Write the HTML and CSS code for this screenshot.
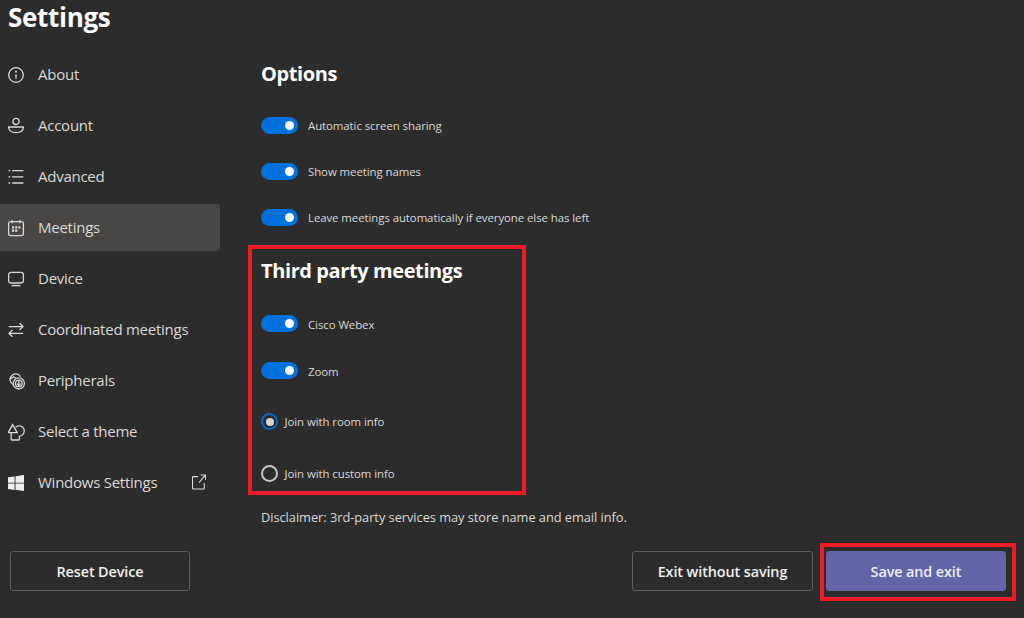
FILE: index.html
```html
<!DOCTYPE html>
<html lang="en">
<head>
<meta charset="utf-8">
<title>Settings</title>
<link rel="stylesheet" href="styles.css">
</head>
<body>
<div class="page">
  <div class="top">
    <aside class="sidebar">
      <h1 class="title">Settings</h1>
      <nav class="nav">
        <div class="nav-item">
          <svg class="icon" viewBox="0 -1 18 18"><circle cx="8" cy="8" r="7.3"/><path d="M8 7.2v4.4"/><circle class="fill" cx="8" cy="4.8" r="1"/></svg>
          <span>About</span>
        </div>
        <div class="nav-item">
          <svg class="icon" viewBox="0 -1 18 18"><circle cx="8" cy="3.4" r="3.1"/><path d="M.6 9h14.8c0 3.4-2.6 5.6-7.4 5.6S.6 12.4.6 9z"/></svg>
          <span>Account</span>
        </div>
        <div class="nav-item">
          <svg class="icon" viewBox="0 -1 18 18"><path d="M4.2 1.6h11.2M4.2 7.8h11.2M4.2 14h11.2M.6 1.6h1.6M.6 7.8h1.6M.6 14h1.6"/></svg>
          <span>Advanced</span>
        </div>
        <div class="nav-item active">
          <svg class="icon" viewBox="0 -1 18 18"><rect x=".6" y="1.6" width="14.8" height="14" rx="2"/><path d="M4.2 0v3.2M11.8 0v3.2"/><path class="dots" d="M4 6.2h2.2v2.2H4zM7.2 6.2h2.2v2.2H7.2zM10.4 6.2h2v2.2h-2zM4 9.6h2.2v2.2H4zM7.2 9.6h2.2v2.2H7.2z"/></svg>
          <span>Meetings</span>
        </div>
        <div class="nav-item">
          <svg class="icon" viewBox="0 -1 18 18"><rect x=".6" y="1.4" width="14.8" height="10.6" rx="2.4"/><path d="M3.6 14.6h8.8"/></svg>
          <span>Device</span>
        </div>
        <div class="nav-item">
          <svg class="icon" viewBox="0 -1 18 18"><path d="M.8 4.6h14.2M11.5 1.2L15 4.6 11.5 8M1 11.4h14.2M4.5 8L1 11.4l3.5 3.4"/></svg>
          <span>Coordinated meetings</span>
        </div>
        <div class="nav-item">
          <svg class="icon" viewBox="0 -1 18 18"><path d="M5.4 11.6A5.6 5.6 0 1 1 12.6 3.8"/><path d="M2.6 6l3-2.2 2.2 1.4"/><circle cx="10.8" cy="10.4" r="5.6"/><circle cx="10.8" cy="10.4" r="3.3"/><path d="M10.8 7.8v4.6M8.9 10.6l1.9 1.9 1.9-1.9"/></svg>
          <span>Peripherals</span>
        </div>
        <div class="nav-item">
          <svg class="icon" viewBox="0 -1 18 18"><path d="M4.6.6L.2 8.6h9z"/><path d="M7.6 3.2a5.2 5.2 0 1 1 3.8 9"/><path d="M3.2 8.6v6.6c0 .5.3.8.8.8h6.6c.5 0 .8-.3.8-.8v-3"/></svg>
          <span>Select a theme</span>
        </div>
        <div class="nav-item">
          <svg class="icon win" viewBox="0 -1 18 18"><path d="M0 2.3l6.6-.9v6.3H0zM7.5 1.3L16 0v7.7H7.5zM0 8.6h6.6v6.4L0 14.1zM7.5 8.6H16V16l-8.5-1.2z"/></svg>
          <span class="nav-grow">Windows Settings</span>
          <svg class="icon ext" viewBox="0 0 14 16"><path d="M6 2.6H1.2c-.4 0-.7.3-.7.7v11c0 .4.3.7.7.7h10.4c.4 0 .7-.3.7-.7V9M7 8.6L13 1.4M8.6 1h4.9v4.8"/></svg>
        </div>
      </nav>
    </aside>
    <main class="main">
      <h2 class="heading">Options</h2>
      <div class="option-list">
        <div class="option"><span class="toggle"></span><span>Automatic screen sharing</span></div>
        <div class="option"><span class="toggle"></span><span>Show meeting names</span></div>
        <div class="option"><span class="toggle"></span><span>Leave meetings automatically if everyone else has left</span></div>
      </div>
      <section class="third-party">
        <h2 class="heading">Third party meetings</h2>
        <div class="row row-cisco"><span class="toggle"></span><span>Cisco Webex</span></div>
        <div class="row row-zoom"><span class="toggle"></span><span>Zoom</span></div>
        <div class="row row-radio1"><span class="radio checked"></span><span>Join with room info</span></div>
        <div class="row row-radio2"><span class="radio"></span><span>Join with custom info</span></div>
      </section>
      <p class="disclaimer">Disclaimer: 3rd-party services may store name and email info.</p>
    </main>
  </div>
  <footer class="footer">
    <button class="btn">Reset Device</button>
    <div class="actions">
      <button class="btn btn-exit">Exit without saving</button>
      <div class="save-frame"><button class="btn btn-primary">Save and exit</button></div>
    </div>
  </footer>
</div>
</body>
</html>
```
FILE: styles.css
```css
* { box-sizing: border-box; }
html, body { margin: 0; height: 100%; }
body {
  background: #2d2c2c;
  color: #d9d8d7;
  font-family: "Open Sans", "Noto Sans", sans-serif;
  overflow: hidden;
}
.page { display: flex; flex-direction: column; width: 1024px; height: 618px; }
.top { display: flex; height: 543px; }
.sidebar { width: 220px; flex: none; }
.title {
  margin: 0;
  height: 51px;
  padding: 1px 0 0 8px;
  font-size: 26px;
  line-height: 33px;
  font-weight: 700;
  letter-spacing: -.3px;
  color: #fff;
}
.nav { display: flex; flex-direction: column; gap: 4px; }
.nav-item {
  display: flex;
  align-items: center;
  height: 47px;
  padding-left: 8px;
  font-size: 15px;
  line-height: 20px;
  letter-spacing: -.25px;
  border-radius: 0 3px 3px 0;
}
.nav-item span { margin-bottom: 2px; }
.nav-item.active { background: #484644; }
.icon {
  width: 18px;
  height: 18px;
  flex: none;
  margin-right: 12px;
  fill: none;
  stroke: #d9d8d7;
  stroke-width: 1.3;
}
.icon .fill, .icon .dots { fill: #d9d8d7; stroke: none; }
.icon.win { fill: #eeeeee; stroke: none; }
.icon.ext { width: 14px; height: 16px; margin: 0 0 2px; stroke-width: 1.1; }
.nav-grow { width: 154px; }
.main { flex: 1; padding: 60px 0 0 28px; }
.heading {
  margin: 0;
  height: 28px;
  font-size: 20px;
  line-height: 28px;
  font-weight: 700;
  letter-spacing: -.4px;
  color: #fff;
}
.main > .heading { margin-left: 13px; }
.option-list { margin: 14px 0 0 13px; }
.option, .row {
  display: flex;
  align-items: center;
  font-size: 11.4px;
  letter-spacing: -.06px;
}
.option { height: 46px; }
.toggle {
  position: relative;
  flex: none;
  width: 37px;
  height: 17px;
  margin-right: 10px;
  border-radius: 9px;
  background: #0070dc;
}
.toggle::after {
  content: "";
  position: absolute;
  top: 4px;
  right: 4px;
  width: 9px;
  height: 9px;
  border-radius: 50%;
  background: #fff;
}
.third-party {
  width: 278px;
  height: 250px;
  margin-top: 5px;
  padding: 8px 0 0 9px;
  border: 4px solid #ed1c24;
}
.row { height: 29px; }
.row .toggle + span { padding-top: 1px; }
.row-cisco { margin-top: 24px; }
.row-zoom { margin-top: 18px; }
.row-radio1 { margin-top: 22px; }
.row-radio2 { margin-top: 23px; }
.radio {
  flex: none;
  width: 17px;
  height: 17px;
  margin-right: 6.5px;
  border: 2px solid #c8c6c4;
  border-radius: 50%;
}
.radio.checked {
  border: 2px solid #0a65c0;
  padding: 2.5px;
  background: #d6d5d4 content-box;
}
.disclaimer {
  margin: 12px 0 0 13px;
  height: 20px;
  font-size: 12.8px;
  line-height: 20px;
  letter-spacing: -.03px;
}
.footer {
  display: flex;
  justify-content: space-between;
  align-items: flex-start;
  flex: 1;
  padding: 8px 8px 0 10px;
}
.actions { display: flex; align-items: flex-start; }
.btn {
  width: 180px;
  height: 40px;
  padding: 0;
  font: 600 14.4px "Open Sans", "Noto Sans", sans-serif;
  letter-spacing: -.1px;
  color: #f0f0f0;
  background: transparent;
  border: 1px solid #605e5c;
  border-radius: 3px;
}
.btn-exit { width: 181px; margin-right: 7px; }
.save-frame {
  width: 196px;
  height: 58px;
  margin-top: -8px;
  padding: 4px 0 0 2px;
  border: 4px solid #ed1c24;
}
.btn-primary { background: #6264a7; border-color: #6264a7; }
```
